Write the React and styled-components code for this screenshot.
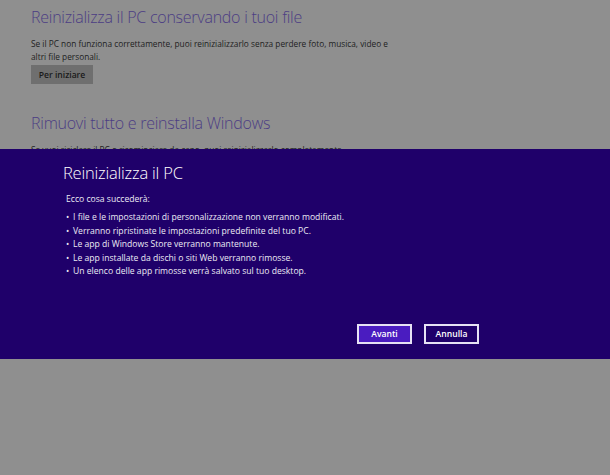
import styled, { createGlobalStyle } from "styled-components";

const GlobalStyle = createGlobalStyle`
    html, body {
        margin: 0;
        padding: 0;
        background: #8e8e8e;
    }
    #root {
        height: 475px;
    }
`

const bullets = [
    "I file e le impostazioni di personalizzazione non verranno modificati.",
    "Verranno ripristinate le impostazioni predefinite del tuo PC.",
    "Le app di Windows Store verranno mantenute.",
    "Le app installate da dischi o siti Web verranno rimosse.",
    "Un elenco delle app rimosse verrà salvato sul tuo desktop.",
];

export default function App() {
    return (
        <Page>
            <GlobalStyle />
            <Settings>
                <Section>
                    <Heading>Reinizializza il PC conservando i tuoi file</Heading>
                    <Text>
                        Se il PC non funziona correttamente, puoi reinizializzarlo senza perdere foto, musica, video e
                        altri file personali.
                    </Text>
                    <GreyButton>Per iniziare</GreyButton>
                </Section>
                <Section>
                    <Heading>Rimuovi tutto e reinstalla Windows</Heading>
                    <Text>
                        Se vuoi riciclare il PC o ricominciare da capo, puoi reinizializzarlo completamente.
                    </Text>
                </Section>
            </Settings>
            <Dialog>
                <DialogBody>
                    <Title>Reinizializza il PC</Title>
                    <Intro>Ecco cosa succederà:</Intro>
                    <List>
                        {bullets.map(b => <li key={b}>{b}</li>)}
                    </List>
                </DialogBody>
                <Actions>
                    <DialogButton primary>Avanti</DialogButton>
                    <DialogButton>Annulla</DialogButton>
                </Actions>
            </Dialog>
        </Page>
    )
}

const Page = styled.div`
    width: 610px;
    height: 475px;
    position: relative;
    overflow: hidden;
    background: #8f8f8f;
    font-family: "Open Sans", "Liberation Sans", sans-serif;
`

const Settings = styled.div`
    padding: 5px 0 0 31px;
    display: flex;
    flex-direction: column;
    gap: 27px;
`

const Section = styled.div`
    display: flex;
    flex-direction: column;
    align-items: flex-start;
`

const Heading = styled.h2`
    margin: 0;
    font-size: 16px;
    font-weight: 300;
    color: #4c3d84;
    line-height: 24px;
    letter-spacing: -0.25px;
`

const Text = styled.p`
    margin: 9px 0 0;
    width: 370px;
    font-size: 8.3px;
    line-height: 12.5px;
    color: #1e1e1e;
`

const GreyButton = styled.div`
    margin-top: 2px;
    width: 62px;
    height: 19px;
    background: #6f6f6f;
    color: #1a1a1a;
    font-size: 8.6px;
    font-weight: 600;
    display: flex;
    align-items: center;
    justify-content: center;
`

const Dialog = styled.div`
    position: absolute;
    left: 0;
    top: 149px;
    width: 100%;
    height: 210px;
    background: #1f006a;
    color: #ffffff;
    box-sizing: border-box;
    padding: 12px 131px 15px 63px;
    display: flex;
    flex-direction: column;
    justify-content: space-between;
`

const DialogBody = styled.div`
    display: flex;
    flex-direction: column;
`

const Title = styled.h1`
    margin: 0;
    font-size: 16.5px;
    font-weight: 300;
    line-height: 24px;
    letter-spacing: -0.2px;
`

const Intro = styled.p`
    margin: 8px 0 0 3px;
    font-size: 8.6px;
    line-height: 12px;
    color: #ecebf4;
`

const List = styled.ul`
    margin: 6px 0 0 3px;
    padding: 0;
    list-style: none;
    font-size: 8.6px;
    line-height: 13.5px;
    color: #ecebf4;

    & li::before {
        content: "•";
        display: inline-block;
        width: 7px;
    }
`

const Actions = styled.div`
    display: flex;
    justify-content: flex-end;
    gap: 12px;
`

const DialogButton = styled.div`
    width: 55px;
    height: 20px;
    box-sizing: border-box;
    border: 2px solid #e6e2f4;
    background: ${p => p.primary ? "#4a1cc0" : "#1f006a"};
    color: #ffffff;
    font-size: 8.6px;
    font-weight: 600;
    display: flex;
    align-items: center;
    justify-content: center;
`
